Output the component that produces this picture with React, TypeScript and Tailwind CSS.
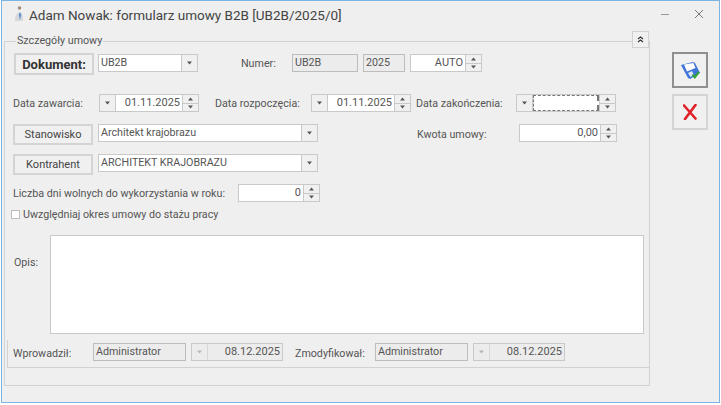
import type { ReactNode } from 'react';

const font = "[font-family:Roboto,sans-serif]";

function Arrow({ up = false, light = false }: { up?: boolean; light?: boolean }) {
  return (
    <svg width="7" height="4" viewBox="0 0 7 4" className={up ? 'rotate-180' : ''}>
      <path d="M1 0.5h5L3.5 3.5z" fill={light ? '#b5b5b5' : '#555'} />
    </svg>
  );
}

function Spin() {
  return (
    <div className="flex h-full w-4 shrink-0 flex-col border-l border-[#c9c9c9] bg-[#f0f0f0]">
      <div className="flex flex-1 items-center justify-center border-b border-[#c9c9c9]">
        <Arrow up />
      </div>
      <div className="flex flex-1 items-center justify-center">
        <Arrow />
      </div>
    </div>
  );
}

function Label({ w, className = '', children }: { w: string; className?: string; children: ReactNode }) {
  return <span className={`${w} ${className} shrink-0 whitespace-nowrap`}>{children}</span>;
}

function ActionButton({ bold = false, className = '', children }: { bold?: boolean; className?: string; children: ReactNode }) {
  return (
    <button className={`flex h-[21px] w-20 shrink-0 items-center justify-center border-2 border-[#d4d4d4] bg-[#f0f0f0] pt-[2px] ${bold ? 'text-[13px] font-bold text-[#333]' : 'text-[11px] text-[#444]'} ${className}`}>
      {children}
    </button>
  );
}

function Combo({ w, children }: { w: string; children: ReactNode }) {
  return (
    <div className={`${w} flex h-[18px] shrink-0 border border-[#c9c9c9] bg-white`}>
      <span className="flex-1 truncate pl-[2px] leading-[16px]">{children}</span>
      <div className="flex w-4 items-center justify-center border-l border-[#c9c9c9] bg-[#f0f0f0]">
        <Arrow />
      </div>
    </div>
  );
}

function DatePicker({ focused = false, children }: { focused?: boolean; children?: ReactNode }) {
  return (
    <div className="flex h-[18px] w-[100px] shrink-0 border border-[#c9c9c9] bg-white">
      <div className="flex w-4 items-center justify-center border-r border-[#c9c9c9] bg-[#f0f0f0]">
        <Arrow />
      </div>
      <span
        className={`flex-1 pr-[2px] text-right text-[11px] leading-[15px] ${focused ? 'border border-r-2 border-dashed border-[#777]' : ''}`}
      >
        {children}
      </span>
      <Spin />
    </div>
  );
}

function NumberField({ w, children }: { w: string; children: ReactNode }) {
  return (
    <div className={`${w} flex h-[18px] shrink-0 border border-[#c9c9c9] bg-white`}>
      <span className="flex-1 pr-[2px] text-right text-[11px] leading-[15px]">{children}</span>
      <Spin />
    </div>
  );
}

function ReadOnly({ w, children }: { w: string; children: ReactNode }) {
  return (
    <div className={`${w} h-[18px] shrink-0 border border-[#bdbdbd] bg-[#ececec] pl-[2px] leading-[15px]`}>
      {children}
    </div>
  );
}

function ReadOnlyDate() {
  return (
    <div className="flex h-[18px] w-[92px] shrink-0 border border-[#c9c9c9] bg-[#ececec]">
      <div className="flex w-4 items-center justify-center border-r border-[#d8d8d8]">
        <Arrow light />
      </div>
      <span className="flex-1 pr-[2px] text-right text-[11px] leading-[15px]">08.12.2025</span>
    </div>
  );
}

export default function App() {
  return (
    <div className={`h-[405px] w-[721px] overflow-hidden bg-white pl-px text-[10.7px] text-[#555] ${font}`}>
      <div className="flex h-[403px] w-[719px] flex-col border border-[#79b4e2] bg-[#efefef]">
        {/* pasek tytulu */}
        <div className="flex h-[40px] shrink-0 items-start">
          <svg width="16" height="18" viewBox="0 0 16 18" className="ml-[9px] mt-[4px]">
            <circle cx="8.5" cy="3" r="1.8" fill="#a08a78" />
            <path d="M4 16c0-5 1-8 5-9 3 1 3 4 3 9z" fill="#d6d8dc" />
            <path d="M9 7l1.2 3L9 15 7.8 10z" fill="#5f8ccc" />
          </svg>
          <span className="ml-[2px] mt-[3px] whitespace-nowrap text-[13.5px] leading-[22px] text-[#444]">
            Adam Nowak: formularz umowy B2B [UB2B/2025/0]
          </span>
          <svg width="10" height="10" viewBox="0 0 10 10" className="ml-auto mr-[24px] mt-[8px]">
            <path d="M1 5.5h8" stroke="#999" />
          </svg>
          <svg width="10" height="10" viewBox="0 0 10 10" className="mr-[15px] mt-[8px]">
            <path d="M1 1l8 8M9 1l-8 8" stroke="#777" />
          </svg>
        </div>

        <div className="flex flex-1">
          {/* panel formularza */}
          <div className="ml-[2px] flex h-[346px] w-[646px] shrink-0 flex-col">
            <div className="relative flex h-[299px] shrink-0 flex-col border-l border-r border-t border-[#d2d2d2]">
              <span className="absolute left-[11px] top-[-9px] bg-[#efefef] px-[1px] leading-[16px]">Szczegóły umowy</span>
              <button className="absolute right-0 top-[-11px] flex h-[17px] w-[17px] items-center justify-center border border-[#d2d2d2] bg-[#f0f0f0]">
                <svg width="7" height="7" viewBox="0 0 7 7">
                  <path d="M1 3l2.5-2L6 3M1 6l2.5-2L6 6" fill="none" stroke="#333" strokeWidth="1.2" />
                </svg>
              </button>

              <div className="mt-[11px] flex h-[22px] items-start">
                <ActionButton bold className="ml-[9px] h-[22px]">Dokument:</ActionButton>
                <div className="ml-[4px] mt-px"><Combo w="w-[100px]">UB2B</Combo></div>
                <Label w="w-[51px]" className="ml-[43px] leading-[22px]">Numer:</Label>
                <div className="mt-px"><ReadOnly w="w-[66px]">UB2B</ReadOnly></div>
                <div className="ml-[5px] mt-px"><ReadOnly w="w-[42px]">2025</ReadOnly></div>
                <div className="ml-[5px] mt-px"><NumberField w="w-[72px]">AUTO</NumberField></div>
              </div>

              <div className="mt-[19px] flex h-[18px] items-start">
                <Label w="w-[86px]" className="ml-[8px] leading-[19px]">Data zawarcia:</Label>
                <DatePicker>01.11.2025</DatePicker>
                <Label w="w-[96px]" className="ml-[16px] leading-[19px]">Data rozpoczęcia:</Label>
                <DatePicker>01.11.2025</DatePicker>
                <Label w="w-[100px]" className="ml-[5px] leading-[19px]">Data zakończenia:</Label>
                <DatePicker focused />
              </div>

              <div className="mt-[12px] flex h-[21px] items-start">
                <ActionButton className="ml-[8px]">Stanowisko</ActionButton>
                <div className="ml-[5px]"><Combo w="w-[220px]">Architekt krajobrazu</Combo></div>
                <Label w="w-[102px]" className="ml-[99px] leading-[21px]">Kwota umowy:</Label>
                <NumberField w="w-[98px]">0,00</NumberField>
              </div>

              <div className="mt-[9px] flex h-[21px] items-start">
                <ActionButton className="ml-[8px]">Kontrahent</ActionButton>
                <div className="ml-[5px]"><Combo w="w-[220px]">ARCHITEKT KRAJOBRAZU</Combo></div>
              </div>

              <div className="mt-[9px] flex h-[18px] items-start">
                <Label w="w-[225px]" className="ml-[8px] leading-[19px]">Liczba dni wolnych do wykorzystania w roku:</Label>
                <NumberField w="w-[82px]">0</NumberField>
              </div>

              <label className="ml-[6px] mt-[5px] flex h-[14px] items-center">
                <input type="checkbox" className="h-[9px] w-[9px] appearance-none border border-[#bdbdbd] bg-white" />
                <span className="ml-[3px] pt-[2px]">Uwzględniaj okres umowy do stażu pracy</span>
              </label>

              <div className="mt-[14px] flex h-[99px] items-center">
                <Label w="w-[36px]" className="ml-[9px] mb-[43px]">Opis:</Label>
                <textarea className="h-full w-[594px] resize-none border border-[#c9c9c9] bg-white" />
              </div>
            </div>

            {/* stopka */}
            <div className="flex h-[46px] shrink-0 flex-col border-b border-l border-r border-[#d2d2d2]">
              <div className="ml-[2px] flex h-[28px] shrink-0 items-start border-b border-l border-[#d2d2d2] pt-[3px]">
                <Label w="w-[80px]" className="ml-[5px] leading-[21px]">Wprowadził:</Label>
                <ReadOnly w="w-[93px]">Administrator</ReadOnly>
                <div className="ml-[5px]"><ReadOnlyDate /></div>
                <Label w="w-[80px]" className="ml-[12px] leading-[21px]">Zmodyfikował:</Label>
                <ReadOnly w="w-[93px]">Administrator</ReadOnly>
                <div className="ml-[5px]"><ReadOnlyDate /></div>
              </div>
            </div>
          </div>

          {/* przyciski akcji */}
          <div className="ml-[22px] mt-[11px] flex w-[36px] shrink-0 flex-col gap-[6px]">
            <button className="flex h-[36px] items-center justify-center border-2 border-[#8f8f8f] bg-[#f0f0f0]">
              <svg width="20" height="20" viewBox="0 0 20 20">
                <path d="M1 5l12-3 2 1 5 10-10 6-2-1z" fill="#3f74d8" />
                <path d="M4 4.5l9.5-1.5 2 5-8.5 3.500z" fill="#fdfdfd" />
                <path d="M8 13l4-2 2 4-3.500 2z" fill="#dce6f8" />
                <path d="M12.500 14.500l2.300 2.800 4.200-5.500" fill="none" stroke="#2fa23a" strokeWidth="2.200" />
              </svg>
            </button>
            <button className="flex h-[36px] items-center justify-center border-2 border-[#d4d4d4] bg-[#f0f0f0]">
              <svg width="14" height="16" viewBox="0 0 14 16">
                <path d="M1 1.500l11.500 13M12.500 1L2 15" fill="none" stroke="#e01f26" strokeWidth="2.600" strokeLinecap="round" />
              </svg>
            </button>
          </div>
        </div>
      </div>
    </div>
  );
}
